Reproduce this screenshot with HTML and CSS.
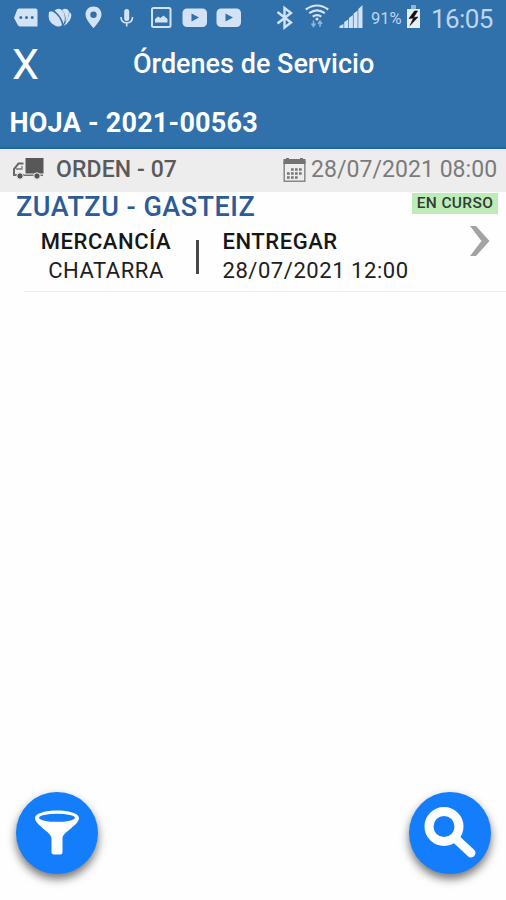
FILE: index.html
```html
<!DOCTYPE html>
<html lang="es">
<head>
<meta charset="utf-8">
<title>Órdenes de Servicio</title>
<link rel="stylesheet" href="styles.css">
</head>
<body>
<div class="screen">
  <header class="header">
    <div class="status">
      <svg class="notices" width="253" height="36" viewBox="0 0 253 36" fill="#d3e2f4">
        <path d="M19 8.500H35.500Q37.500 8.500 37.500 10.500V26.500H20Q18.500 26.500 17.500 24.500L14 18L17 10Q17.500 8.500 19 8.500Z"/>
        <g fill="#3070ab"><circle cx="20.800" cy="17.500" r="1.500"/><circle cx="26.500" cy="17.500" r="1.500"/><circle cx="32.200" cy="17.500" r="1.500"/></g>
        <path d="M49 12Q47 21 54 25Q59 28 62 25Q61 19 56 14Q52 10 49 12Z"/>
        <path d="M54.500 10.500Q60 6 64 13Q66 19 63.500 24Q62 17 54.500 10.500Z"/>
        <path d="M62 10Q66 7 69 11Q69 18 65.500 22.500Q66.500 15 62 10Z"/>
        <path d="M69.500 12Q73 14 70 20Q67.500 24 63.500 26Q68.500 19 69.500 12Z"/>
        <path fill-rule="evenodd" d="M93.500 6.500C88.800 6.500 85.500 10 85.500 14.500C85.500 20 93.500 28 93.500 28S101.500 20 101.500 14.500C101.500 10 98.200 6.500 93.500 6.500ZM93.500 11.500A3.200 3.200 0 1 1 93.500 17.900A3.200 3.200 0 1 1 93.500 11.500Z"/>
        <rect x="124.200" y="9" width="5" height="12" rx="2.500"/>
        <path d="M121 17Q121 22.800 126.700 22.800Q132.500 22.800 132.500 17M126.700 22.500V26.500" fill="none" stroke="#d3e2f4" stroke-width="1.600"/>
        <rect x="152" y="8" width="18.500" height="19" rx="1.500" fill="none" stroke="#d3e2f4" stroke-width="2"/>
        <path d="M155 22.500V19L158 16.500L160.500 18L163.500 15.500L167.500 19V22.500Z"/>
        <rect x="182.500" y="8.500" width="24.500" height="18.500" rx="4.500"/>
        <rect x="216.500" y="8.500" width="24.500" height="18.500" rx="4.500"/>
        <path fill="#3070ab" d="M191.500 13.500L199 17.500L191.500 21.500ZM225.500 13.500L233 17.500L225.500 21.500Z"/>
      </svg>
      <svg class="signals" width="117" height="36" viewBox="253 0 117 36" fill="#d3e2f4">
        <path d="M277.500 12L291 22.500L284.500 27.500V8L291 13L277.500 23.500" fill="none" stroke="#d3e2f4" stroke-width="2.400"/>
        <g fill="none" stroke="#d3e2f4" stroke-width="2.200"><path d="M305.800 9.500Q317 1.500 328.200 9.500M309.200 13.200Q317 7.500 324.800 13.200M312.700 16.600Q317 13.500 321.300 16.600"/></g>
        <circle cx="317" cy="19" r="1.500"/>
        <path d="M313.500 20.500V26M311.500 23.500L313.500 26.500L315.500 23.500M320 27V21.500M318 24L320 21L322 24" fill="none" stroke="#8db5df" stroke-width="1.500"/>
        <path d="M339.500 28V26L343.500 24V28Z M344.200 28V22L348.200 19.500V28Z M348.900 28V18L352.900 15V28Z M353.600 28V13.500L357.600 10.500V28Z M358.300 28V9L362.500 5V28Z"/>
      </svg>
      <span class="percent">91%</span>
      <svg class="battery" width="15" height="24" viewBox="0 0 15 24"><path d="M5 0H10V4H14V23H1V4H5Z" fill="#e6eef6"/><path d="M5 0H10V4H5Z" fill="#8db5df"/><path d="M8.500 6L3 13.500L7.500 13L4 20.500L12 12L7.500 12.500L11.500 6Z" fill="#111" stroke="#111" stroke-width=".6"/></svg>
      <span class="clock">16:05</span>
    </div>
    <div class="toolbar"><span class="close">X</span><h1 class="title">Órdenes de Servicio</h1></div>
    <div class="sheet">HOJA - 2021-00563</div>
  </header>
  <section class="order">
    <svg class="truck" width="32" height="22" viewBox="0 0 32 22"><path d="M13.500 0H31.500V15.500H13.500Z" fill="#585858"/><path d="M11.500 5.500H6.500L2 11V17H12" fill="none" stroke="#666" stroke-width="2"/><path d="M4 11H10V8" fill="none" stroke="#777" stroke-width="1.300"/><path d="M1 16.500H31V18H1Z" fill="#707070"/><circle cx="8" cy="18" r="3.200" fill="#555" stroke="#ededed"/><circle cx="25" cy="18" r="3.200" fill="#555" stroke="#ededed"/></svg>
    <span class="order-name">ORDEN - 07</span>
    <svg class="calendar" width="23" height="25" viewBox="0 0 23 25"><path d="M1.200 3V23.300H21.800V3" fill="none" stroke="#888" stroke-width="1.500"/><path d="M0.500 1H3V0H6V1H17V0H20V1H22.500V6H0.500Z" fill="#737373"/><path d="M8 11.500H20M4 15.500H20M4 19.500H16" fill="none" stroke="#777" stroke-width="2.500" stroke-dasharray="2.700 1.300"/></svg>
    <span class="order-date">28/07/2021 08:00</span>
  </section>
  <main class="route">
    <div class="route-head"><h2 class="route-name">ZUATZU - GASTEIZ</h2><span class="badge">EN CURSO</span></div>
    <div class="details">
      <div class="goods"><div class="label goods-label">MERCANCÍA</div><div class="value goods-value">CHATARRA</div></div>
      <div class="divider"></div>
      <div class="delivery"><div class="label delivery-label">ENTREGAR</div><div class="value delivery-value">28/07/2021 12:00</div></div>
      <svg class="chevron" width="22" height="32" viewBox="0 0 22 32"><path d="M1 1H7L20.500 16L7 31H1L12.500 16Z" fill="#a3a3a3"/></svg>
    </div>
  </main>
  <footer class="actions">
    <button class="fab" aria-label="Filtrar"><svg width="82" height="82" viewBox="0 0 82 82"><path d="M19 26C19 16 63 16 63 26C63 33 47 40 46.500 46V60Q46.500 62.500 44 62.500H38Q35.500 62.500 35.500 60V46C35 40 19 33 19 26Z" fill="#fff"/><ellipse cx="41" cy="25.800" rx="18" ry="4" fill="#147dfb"/></svg></button>
    <button class="fab" aria-label="Buscar"><svg width="82" height="82" viewBox="0 0 82 82" fill="none" stroke="#fff"><circle cx="35" cy="34.500" r="15" stroke-width="9"/><path d="M47 47L62 61" stroke-width="9" stroke-linecap="round"/></svg></button>
  </footer>
</div>
</body>
</html>
```
FILE: styles.css
```css
* { box-sizing: border-box; }
body { margin: 0; background: #fefefe; font-family: Roboto, sans-serif; }
h1, h2 { margin: 0; }
span, h1, h2, .sheet, .label, .value { white-space: nowrap; }
svg { display: block; flex: none; }
.screen { height: 900px; display: flex; flex-direction: column; }
.header { height: 149px; background: #3070ab; border-bottom: 2px solid #1769a9; color: #fff; }
.status { height: 36px; display: flex; color: #bdd5ef; }
.percent { width: 36px; padding-left: 1px; font-size: 16.500px; line-height: 37px; }
.battery { margin-top: 5px; }
.clock { margin-left: 10px; font-size: 26px; line-height: 39px; letter-spacing: -.6px; }
.toolbar { height: 56px; display: flex; }
.close { width: 133px; padding-left: 12px; font-size: 43px; line-height: 57px; }
.title { font-size: 27px; line-height: 56px; font-weight: 500; }
.sheet { padding-left: 9.500px; font-size: 27px; line-height: 62px; font-weight: 700; letter-spacing: .22px; }
.order { height: 43px; background: #ededed; display: flex; color: #5a5a5a; }
.truck { margin: 9px 0 0 12px; }
.order-name { width: 239px; padding-left: 12px; font-size: 23px; line-height: 41px; font-weight: 500; letter-spacing: .1px; }
.calendar { margin-top: 9px; }
.order-date { padding-left: 5px; font-size: 23px; line-height: 41px; color: #7b7b7b; letter-spacing: .05px; }
.route { height: 100px; }
.route-head { height: 30px; display: flex; justify-content: space-between; padding: 0 8px 0 16px; }
.route-name { font-size: 27px; line-height: 31px; font-weight: 500; color: #2b5c99; letter-spacing: .5px; }
.badge { width: 86px; height: 21px; margin-top: 1px; background: #bdecb8; color: #333a36; font-size: 15.500px; line-height: 21px; font-weight: 500; text-align: center; letter-spacing: .35px; }
.details { height: 70px; margin-left: 24px; border-bottom: 1px solid #ececec; display: flex; }
.goods { width: 164px; text-align: center; }
.delivery { width: 246px; }
.label { font-size: 22px; line-height: 29px; padding-top: 5px; font-weight: 500; color: #171717; letter-spacing: .55px; }
.value { font-size: 22px; line-height: 29px; color: #202020; letter-spacing: .55px; }
.divider { width: 3px; height: 34px; margin: 18px 23.500px 0 8px; background: #484848; }
.chevron { margin-top: 3px; }
.actions { margin-top: auto; display: flex; justify-content: space-between; padding: 0 15px 26px 16px; }
.fab { width: 82px; height: 82px; padding: 0; border: 0; border-radius: 50%; background: #147dfb; box-shadow: 0 5px 10px rgba(0,0,0,.55); }
```
